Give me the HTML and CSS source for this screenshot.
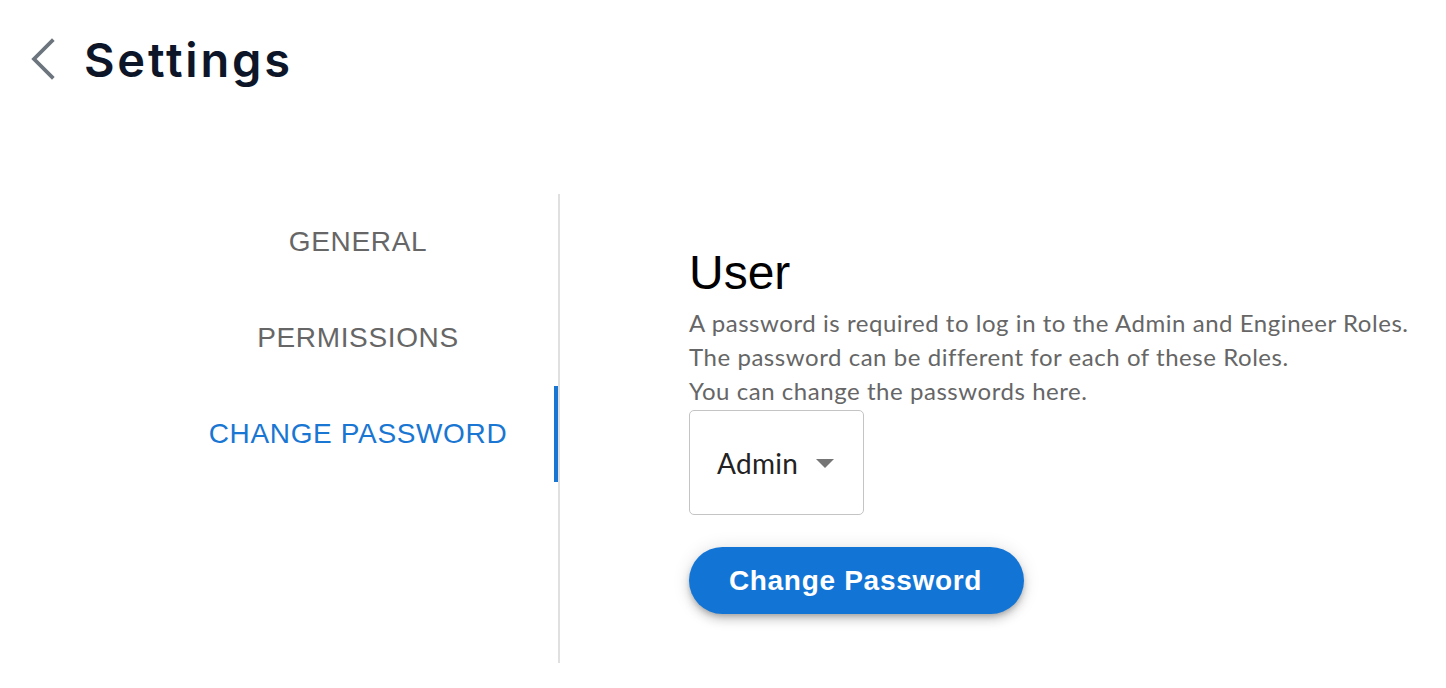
FILE: index.html
```html
<!DOCTYPE html>
<html lang="en">
<head>
<meta charset="utf-8">
<title>Settings</title>
<link rel="stylesheet" href="styles.css">
</head>
<body>
<header class="header">
  <a class="back" href="#" aria-label="Back">
    <svg width="26" height="42" viewBox="0 0 26 42"><path d="M22 3 L4 21 L22 39" fill="none" stroke="#6c757d" stroke-width="3.8" stroke-linecap="square" stroke-linejoin="miter"/></svg>
  </a>
  <h1 class="title">Settings</h1>
</header>
<main class="main">
  <nav class="tabs">
    <div class="tab">GENERAL</div>
    <div class="tab">PERMISSIONS</div>
    <div class="tab active">CHANGE PASSWORD</div>
  </nav>
  <section class="content">
    <h2 class="heading">User</h2>
    <p class="desc">A password is required to log in to the Admin and Engineer Roles.<br>The password can be different for each of these Roles.<br>You can change the passwords here.</p>
    <div class="select">
      <span class="select-value">Admin</span>
      <svg class="caret" width="18" height="10" viewBox="0 0 18 10"><path d="M0 0 L18 0 L9 9 Z" fill="#757575"/></svg>
    </div>
    <button class="btn" type="button">Change Password</button>
  </section>
</main>
</body>
</html>
```
FILE: styles.css
```css
* { box-sizing: border-box; }
html, body { margin: 0; padding: 0; background: #fff; }
body { font-family: "Liberation Sans", Arial, sans-serif; }

.header {
  display: flex;
  align-items: center;
  height: 118px;
  padding-left: 30px;
  gap: 28px;
}
.back { display: flex; align-items: center; }
.title {
  margin: 0;
  font-family: Inter, "Open Sans", sans-serif;
  font-weight: 600;
  font-size: 47px;
  letter-spacing: 2.8px;
  color: #0d1628;
}

.main {
  display: flex;
  margin-top: 76px;
  padding-left: 162px;
}
.tabs {
  display: flex;
  flex-direction: column;
  width: 398px;
  height: 469px;
  border-right: 2px solid #e0e0e0;
}
.tab {
  height: 96px;
  display: flex;
  align-items: center;
  justify-content: center;
  font-size: 28px;
  letter-spacing: 0.65px;
  color: #666;
  border-right: 4px solid transparent;
}
.tab.active {
  color: #1976d2;
  border-right-color: #1976d2;
}

.content {
  padding-left: 129px;
  display: flex;
  flex-direction: column;
  align-items: flex-start;
}
.heading {
  margin: 55px 0 0;
  font-size: 48px;
  line-height: 48px;
  font-weight: 400;
  color: #000;
}
.desc {
  margin: 9px 0 0;
  font-family: Lato, "Noto Sans", sans-serif;
  font-size: 24px;
  letter-spacing: 0.55px;
  line-height: 34px;
  color: #666;
}
.select {
  margin-top: 2px;
  width: 175px;
  height: 105px;
  border: 1px solid #c4c4c4;
  border-radius: 5px;
  display: flex;
  align-items: center;
  padding-left: 27px;
  gap: 18px;
}
.select-value {
  font-family: Lato, "Noto Sans", sans-serif;
  font-size: 28px;
  letter-spacing: 0.3px;
  color: #222;
}
.caret { margin-top: 2px; }
.btn {
  margin-top: 32px;
  width: 335px;
  height: 67px;
  border: none;
  border-radius: 34px;
  background: #1275d6;
  color: #fff;
  font-family: "Liberation Sans", Arial, sans-serif;
  font-weight: 700;
  font-size: 28px;
  letter-spacing: 0.7px;
  padding-right: 8px;
  box-shadow: 0 3px 5px -1px rgba(0,0,0,.2), 0 6px 10px 0 rgba(0,0,0,.14), 0 1px 18px 0 rgba(0,0,0,.12);
  cursor: pointer;
}
```
